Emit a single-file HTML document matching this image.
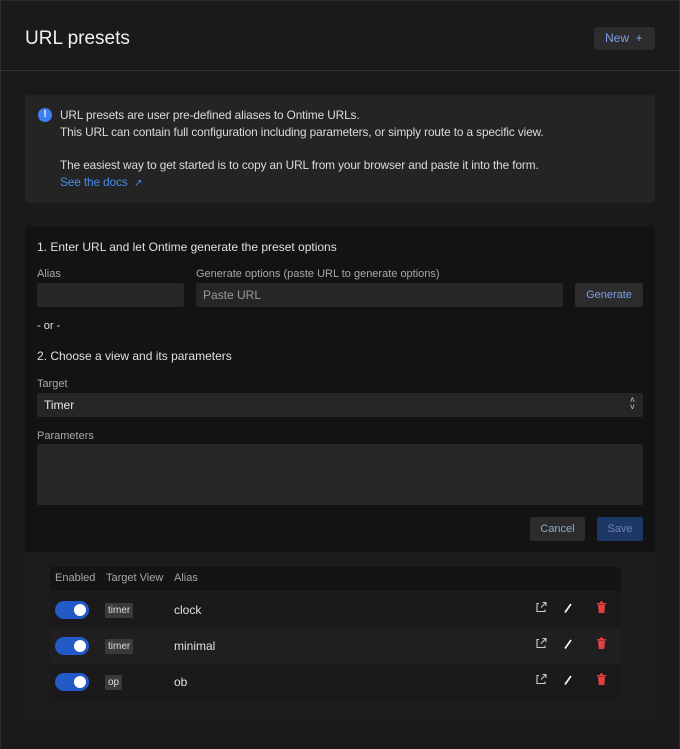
<!DOCTYPE html>
<html><head><style>
*{box-sizing:border-box;margin:0;padding:0}
body{width:680px;height:749px;background:#1a1a1a;font-family:"Liberation Sans",sans-serif;color:#e6e6e6;position:relative;overflow:hidden}
.abs{position:absolute}
.frame{left:0;top:0;width:680px;height:749px;border:1px solid #2a2a2a;border-bottom:none}
h1{position:absolute;left:25px;top:28px;font-size:19px;font-weight:500;color:#f0f0f0}
.new{left:594px;top:27px;width:61px;height:23px;background:#2c2c2c;border-radius:3px;color:#7a9fe6;font-size:12px;line-height:23px;padding-left:11px}
.hr{left:0;top:70px;width:680px;height:1px;background:#333}
.info{left:25px;top:95px;width:630px;height:108px;background:#242424;border-radius:3px}
.info p{position:absolute;left:35px;font-size:11.8px;color:#dcdcdc;letter-spacing:-0.1px}
.ic{left:13px;top:13px;width:14px;height:14px;border-radius:50%;background:#3b7ff0;color:#fff;font-size:10px;font-weight:bold;text-align:center;line-height:14px}
.form{left:25px;top:227px;width:630px;height:325px;background:#131313;border-radius:3px}
.lbl{font-size:11px;color:#a8a8a8}
.t{font-size:12px;color:#e0e0e0}
.inp{background:#262626;border-radius:2px}
.btn{background:#2c2c2c;border-radius:2px;font-size:11px;text-align:center}
.tbl{left:25px;top:552px;width:632px;height:171px;background:#1c1c1c}
.th{left:50px;top:567px;width:571px;height:24px;background:#141414}
.row{left:50px;width:571px;height:36px}
.tog{width:34px;height:18px;border-radius:9px;background:#2459c8}
.tog:after{content:"";position:absolute;right:3px;top:3px;width:12px;height:12px;border-radius:50%;background:#fff}
.tag{background:#3a3a3a;font-size:10px;color:#ddd;padding:2px 3px;border-radius:1px}
</style></head><body>
<div class="abs frame"></div>
<h1>URL presets</h1>
<div class="abs new">New &nbsp;+</div>
<div class="abs hr"></div>
<div class="abs info">
<div class="abs ic">!</div>
<p style="top:13px">URL presets are user pre-defined aliases to Ontime URLs.</p>
<p style="top:30px">This URL can contain full configuration including parameters, or simply route to a specific view.</p>
<p style="top:63px">The easiest way to get started is to copy an URL from your browser and paste it into the form.</p>
<p style="top:80px;color:#4b8ae8">See the docs &nbsp;<span style="font-size:10px">↗</span></p>
</div>
<div class="abs form"></div>
<div class="abs t" style="left:37px;top:240px">1. Enter URL and let Ontime generate the preset options</div>
<div class="abs lbl" style="left:37px;top:268px">Alias</div>
<div class="abs lbl" style="left:196px;top:268px">Generate options (paste URL to generate options)</div>
<div class="abs inp" style="left:37px;top:283px;width:147px;height:24px"></div>
<div class="abs inp" style="left:196px;top:283px;width:367px;height:24px;font-size:12px;color:#9a9a9a;padding:5px 7px">Paste URL</div>
<div class="abs btn" style="left:575px;top:283px;width:68px;height:24px;line-height:24px;color:#7a9fe6">Generate</div>
<div class="abs t" style="left:37px;top:320px;font-size:11px">- or -</div>
<div class="abs t" style="left:37px;top:349px">2. Choose a view and its parameters</div>
<div class="abs lbl" style="left:37px;top:378px">Target</div>
<div class="abs inp" style="left:37px;top:393px;width:606px;height:24px;font-size:12px;padding:5px 7px">Timer<span style="position:absolute;right:8px;top:4px;font-size:9px;line-height:7px;color:#ccc">˄<br>˅</span></div>
<div class="abs lbl" style="left:37px;top:430px">Parameters</div>
<div class="abs inp" style="left:37px;top:444px;width:606px;height:61px"></div>
<div class="abs btn" style="left:530px;top:517px;width:55px;height:24px;line-height:24px;color:#8fa6cc">Cancel</div>
<div class="abs btn" style="left:597px;top:517px;width:46px;height:24px;line-height:24px;background:#1d3766;color:#6f82a8">Save</div>
<div class="abs tbl"></div>
<div class="abs th"></div>
<div class="abs lbl" style="left:55px;top:572px">Enabled</div>
<div class="abs lbl" style="left:106px;top:572px">Target View</div>
<div class="abs lbl" style="left:174px;top:572px">Alias</div>
<div class="abs row" style="top:592px;background:#1a1a1a"></div>
<div class="abs row" style="top:628px;background:#1f1f1f"></div>
<div class="abs row" style="top:664px;background:#1a1a1a"></div>
<div class="abs tog" style="left:55px;top:601px"></div>
<div class="abs tog" style="left:55px;top:637px"></div>
<div class="abs tog" style="left:55px;top:673px"></div>
<span class="abs tag" style="left:105px;top:603px">timer</span>
<span class="abs tag" style="left:105px;top:639px">timer</span>
<span class="abs tag" style="left:105px;top:675px">op</span>
<div class="abs t" style="left:174px;top:603px">clock</div>
<div class="abs t" style="left:174px;top:639px">minimal</div>
<div class="abs t" style="left:174px;top:675px">ob</div>
<svg class="abs" style="left:535px;top:600px" width="75" height="96">
<g fill="none" stroke="#ccc" stroke-width="1.1">
<g id="r"><path d="M4 3.5H2v8h8V9.5M6 7.5L10.5 3M7.5 2.5h3.5V6"/><path d="M30 12.5L36 4" stroke="#fff" stroke-width="1.6"/></g>
<use href="#r" y="36"/><use href="#r" y="72"/>
</g>
<g fill="#e04040"><g id="d"><rect x="62" y="3" width="9" height="1.6"/><path d="M63 5h7l-.7 8h-5.6z"/><rect x="65" y="1.5" width="3" height="1.5"/></g>
<use href="#d" y="36"/><use href="#d" y="72"/></g>
</svg>
</body></html>
